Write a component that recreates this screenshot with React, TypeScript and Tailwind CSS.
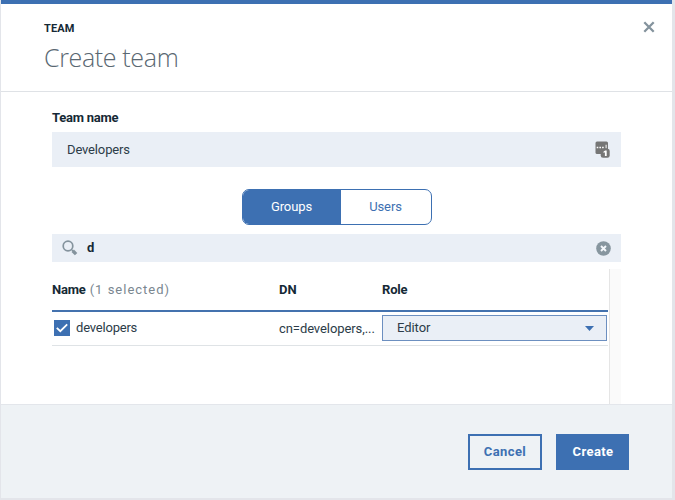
function CloseIcon() {
  return (
    <svg width="12" height="12" viewBox="0 0 12 12" stroke="#84939d" strokeWidth="2.3" fill="none">
      <path d="M1.3 1.3 10.7 10.7M10.7 1.3 1.3 10.7" />
    </svg>
  );
}

function SearchIcon() {
  return (
    <svg width="16" height="16" viewBox="0 0 16 16" fill="none" stroke="#84939d">
      <circle cx="6" cy="6" r="4.8" strokeWidth="1.7" />
      <path d="M9.6 9.6 11 11" strokeWidth="1.3" />
      <path d="m10.7 10.7 3.4 3.4" strokeWidth="3.4" />
    </svg>
  );
}

function PasswordManagerIcon() {
  return (
    <svg width="15" height="17" viewBox="0 0 15 17">
      <rect x="0.5" y="0.5" width="12.5" height="12.5" rx="1.5" fill="#767676" />
      <path d="M1.7 5.7h1.6v1.6H1.7zM4.4 5.7H6v1.6H4.4zM7.1 5.7h1.6v1.6H7.1zM10.6 3.8h1v3.5h-1z" fill="#fff" />
      <rect x="5.7" y="7.7" width="9" height="9" rx="2.3" fill="#767676" />
      <path d="M8.6 10.6 10.2 9.5h1.5V15H9.9v-3.7l-1.3.6z" fill="#fff" />
    </svg>
  );
}

function ClearIcon() {
  return (
    <svg width="15" height="15" viewBox="0 0 15 15">
      <circle cx="7.5" cy="7.5" r="7.3" fill="#87969f" />
      <path d="m5 5 5 5m0-5-5 5" stroke="#f4f7fb" strokeWidth="1.9" />
    </svg>
  );
}

export default function App() {
  return (
    <div className="h-[500px] w-[675px] overflow-hidden bg-[#e3e5ea] pr-[3px] pl-px font-['Roboto','Liberation_Sans',sans-serif] text-[13px] text-[#2c3c48]">
      <div className="flex h-[498px] flex-col bg-white">
        <header className="relative h-[92px] shrink-0 border-t-4 border-b border-t-[#3d70b2] border-b-[#dfe2e6] pl-[43px]">
          <div className="pt-[18px] text-[11px] leading-[14px] font-bold tracking-[0.1px] text-[#152935]">TEAM</div>
          <h1 className="mt-[5px] font-['Open_Sans','Liberation_Sans',sans-serif] text-[25px] leading-[32px] font-light tracking-[-0.35px] text-[#5a6872]">Create team</h1>
          <button className="absolute top-[17px] right-[17px]" aria-label="Close"><CloseIcon /></button>
        </header>

        <main className="flex h-[312px] shrink-0 flex-col pr-[51px] pl-[51px]">
          <label className="mt-[17px] h-[18px] text-[13px] leading-[18px] font-bold tracking-[-0.25px] text-[#152935]">Team name</label>
          <div className="mt-[5px] flex h-[35px] shrink-0 items-center justify-between bg-[#eaeff6] pr-[11px] pl-[15px]">
            <span className="tracking-[-0.15px]">Developers</span>
            <PasswordManagerIcon />
          </div>

          <div className="mt-[22px] flex h-[36px] w-[190px] shrink-0 self-center overflow-hidden rounded-[7px] border border-[#3d70b2]">
            <button className="w-[98px] bg-[#3d70b2] tracking-[-0.1px] text-white">Groups</button>
            <button className="flex-1 tracking-[-0.1px] text-[#3d70b2]">Users</button>
          </div>

          <div className="mt-[9px] flex h-[28px] shrink-0 items-center bg-[#eaeff6] pr-[10px] pl-[10px]">
            <SearchIcon />
            <span className="ml-[9px] flex-1 font-bold text-[#152935]">d</span>
            <ClearIcon />
          </div>

          <div className="mt-[7px] flex min-h-0 flex-1 justify-between">
            <div className="w-[556px]">
              <div className="grid h-[43px] grid-cols-[227px_103px_226px] items-center border-b-2 border-[#4472ae] font-bold text-[#152935]">
                <div className="tracking-[-0.2px]">Name <span className="ml-px font-normal tracking-[1px] text-[#7a8790]">(1 selected)</span></div>
                <div>DN</div>
                <div className="tracking-[-0.2px]">Role</div>
              </div>
              <div className="grid h-[34px] grid-cols-[227px_103px_226px] items-center border-b border-[#dfe3e6]">
                <div className="flex items-center pb-px pl-[2px]">
                  <span className="flex size-4 items-center justify-center bg-[#3d70b2]">
                    <svg width="12" height="10" viewBox="0 0 12 10" fill="none" stroke="white" strokeWidth="1.8"><path d="m.8 4.8 3.5 3.4L11.2 1.4" /></svg>
                  </span>
                  <span className="ml-[6px] tracking-[-0.2px]">developers</span>
                </div>
                <div className="tracking-[-0.08px] whitespace-nowrap">cn=developers,...</div>
                <div className="mb-px flex h-[26px] w-[225px] items-center justify-between border border-[#6c8fc0] bg-[#eaeff6] pr-[12px] pl-[14px]">
                  <span className="tracking-[-0.05px]">Editor</span>
                  <svg width="9" height="5" viewBox="0 0 9 5" fill="#3d70b2"><path d="M0 0h9L4.5 5z" /></svg>
                </div>
              </div>
            </div>
            <div className="w-[12px] border-l border-[#e5e5e5] bg-[#fafafa]" />
          </div>
        </main>

        <footer className="flex flex-1 items-start justify-end gap-[14px] border-t border-[#e3e6eb] bg-[#eef2f5] pt-[29px] pr-[43px]">
          <button className="h-[36px] w-[74px] border-2 border-[#3d70b2] font-bold tracking-[0.4px] text-[#3d70b2]">Cancel</button>
          <button className="h-[36px] w-[73px] bg-[#3d70b2] pl-px font-bold tracking-[0.4px] text-white">Create</button>
        </footer>
      </div>
    </div>
  );
}
